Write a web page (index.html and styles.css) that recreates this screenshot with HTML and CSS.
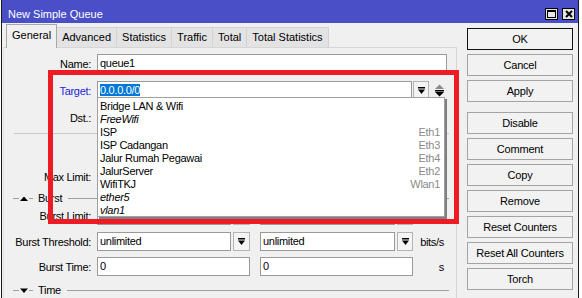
FILE: index.html
```html
<!DOCTYPE html>
<html lang="en">

<head>
    <meta charset="UTF-8">
    <title>New Simple Queue</title>
    <link rel="stylesheet" href="styles.css">
</head>

<body>

    <div class="window">
        <div class="titlebar">
            <span class="title">New Simple Queue</span>
            <div class="title-buttons">
                <span class="tbtn">
                    <svg width="9" height="8" viewBox="0 0 9 8"><rect x="0.5" y="0.5" width="8" height="7" fill="none" stroke="#000"/><rect x="0" y="0" width="9" height="2" fill="#000"/></svg>
                </span>
                <span class="tbtn">
                    <svg width="8" height="8" viewBox="0 0 8 8"><path d="M1 1 L7 7 M7 1 L1 7" stroke="#000" stroke-width="2"/></svg>
                </span>
            </div>
        </div>

        <div class="content">
            <div class="main">
                <div class="tabs">
                    <div class="tab active">General</div>
                    <div class="tab">Advanced</div>
                    <div class="tab">Statistics</div>
                    <div class="tab">Traffic</div>
                    <div class="tab">Total</div>
                    <div class="tab">Total Statistics</div>
                </div>

                <div class="panel">
                    <div class="row row-name">
                        <span class="label">Name:</span>
                        <div class="field wide">queue1</div>
                    </div>

                    <div class="row">
                        <span class="label blue">Target:</span>
                        <div class="field combo"><span class="sel">0.0.0.0/0</span></div>
                        <span class="drop drop-gap1">
                            <svg width="7" height="7" viewBox="0 0 7 7"><rect width="7" height="1.5"/><polygon points="0,2.5 7,2.5 3.5,7"/></svg>
                        </span>
                        <span class="spin">
                            <svg width="9" height="13" viewBox="0 0 9 13"><polygon points="0,5 9,5 4.5,0.5" fill="#8a8a8a"/><rect x="0" y="6" width="9" height="1.5"/><polygon points="0,8 9,8 4.5,12.5"/></svg>
                        </span>
                    </div>

                    <div class="row">
                        <span class="label">Dst.:</span>
                        <div class="field combo"></div>
                        <span class="drop drop-gap1">
                            <svg width="7" height="7" viewBox="0 0 7 7"><rect width="7" height="1.5"/><polygon points="0,2.5 7,2.5 3.5,7"/></svg>
                        </span>
                        <span class="spin">
                            <svg width="9" height="13" viewBox="0 0 9 13"><polygon points="0,5 9,5 4.5,0.5" fill="#8a8a8a"/><rect x="0" y="6" width="9" height="1.5"/><polygon points="0,8 9,8 4.5,12.5"/></svg>
                        </span>
                    </div>

                    <div class="separator"></div>

                    <!-- column captions sit under the open list -->
                    <div class="row row-head"></div>

                    <div class="row row-max">
                        <span class="label">Max Limit:</span>
                        <div class="field half"></div>
                        <span class="drop"><svg width="7" height="7" viewBox="0 0 7 7"><rect width="7" height="1.5"/><polygon points="0,2.5 7,2.5 3.5,7"/></svg></span>
                        <div class="field half second"></div>
                        <span class="drop"><svg width="7" height="7" viewBox="0 0 7 7"><rect width="7" height="1.5"/><polygon points="0,2.5 7,2.5 3.5,7"/></svg></span>
                        <span class="unit"></span>
                    </div>

                    <div class="section section-burst">
                        <span class="dash short"></span>
                        <svg class="tri" width="8" height="5" viewBox="0 0 8 5"><polygon points="0,5 8,5 4,0.5"/></svg>
                        <span class="dash tiny"></span>
                        <span class="section-name">Burst</span>
                        <span class="dash long"></span>
                    </div>

                    <div class="row row-burst">
                        <span class="label">Burst Limit:</span>
                        <div class="field half">unlimited</div>
                        <span class="drop"><svg width="7" height="7" viewBox="0 0 7 7"><rect width="7" height="1.5"/><polygon points="0,2.5 7,2.5 3.5,7"/></svg></span>
                        <div class="field half second">unlimited</div>
                        <span class="drop"><svg width="7" height="7" viewBox="0 0 7 7"><rect width="7" height="1.5"/><polygon points="0,2.5 7,2.5 3.5,7"/></svg></span>
                        <span class="unit">bits/s</span>
                    </div>

                    <div class="row row-threshold">
                        <span class="label">Burst Threshold:</span>
                        <div class="field half">unlimited</div>
                        <span class="drop"><svg width="7" height="7" viewBox="0 0 7 7"><rect width="7" height="1.5"/><polygon points="0,2.5 7,2.5 3.5,7"/></svg></span>
                        <div class="field half second">unlimited</div>
                        <span class="drop"><svg width="7" height="7" viewBox="0 0 7 7"><rect width="7" height="1.5"/><polygon points="0,2.5 7,2.5 3.5,7"/></svg></span>
                        <span class="unit">bits/s</span>
                    </div>

                    <div class="row row-time">
                        <span class="label">Burst Time:</span>
                        <div class="field full-half">0</div>
                        <div class="field full-half second">0</div>
                        <span class="unit">s</span>
                    </div>

                    <div class="section section-time">
                        <span class="dash short"></span>
                        <svg class="tri" width="8" height="5" viewBox="0 0 8 5"><polygon points="0,0.5 8,0.5 4,5"/></svg>
                        <span class="dash tiny"></span>
                        <span class="section-name">Time</span>
                        <span class="dash long"></span>
                    </div>

                    <div class="target-list">
                        <div class="opt"><span>Bridge LAN &amp; Wifi</span></div>
                        <div class="opt italic"><span>FreeWifi</span></div>
                        <div class="opt"><span>ISP</span><span class="iface">Eth1</span></div>
                        <div class="opt"><span>ISP Cadangan</span><span class="iface">Eth3</span></div>
                        <div class="opt"><span>Jalur Rumah Pegawai</span><span class="iface">Eth4</span></div>
                        <div class="opt"><span>JalurServer</span><span class="iface">Eth2</span></div>
                        <div class="opt"><span>WifiTKJ</span><span class="iface">Wlan1</span></div>
                        <div class="opt italic"><span>ether5</span></div>
                        <div class="opt italic"><span>vlan1</span></div>
                    </div>

                    <div class="highlight"></div>
                </div>
            </div>

            <div class="buttons">
                <button class="btn default">OK</button>
                <button class="btn">Cancel</button>
                <button class="btn">Apply</button>
                <button class="btn spaced">Disable</button>
                <button class="btn">Comment</button>
                <button class="btn">Copy</button>
                <button class="btn">Remove</button>
                <button class="btn">Reset Counters</button>
                <button class="btn">Reset All Counters</button>
                <button class="btn">Torch</button>
            </div>
        </div>
    </div>

</body>

</html>
```

FILE: styles.css
```css
body {
    margin: 0;
    background-color: #ffffff;
    font-family: "Liberation Sans", Arial, sans-serif;
    font-size: 11px;
    letter-spacing: -0.3px;
    color: #000;
}

.window {
    width: 578px;
    height: 298px;
    margin-left: 1px;
    box-sizing: border-box;
    border-left: 1px solid #1a1a1a;
    border-right: 1px solid #1a1a1a;
    background-color: #f0f0f0;
    overflow: hidden;
}

/* title bar */
.titlebar {
    height: 23px;
    box-sizing: border-box;
    padding: 5px 3px 0 6px;
    display: flex;
    align-items: center;
    justify-content: space-between;
    background-color: #4a4fc8;
    color: #fff;
}

.title {
    line-height: 13px;
    letter-spacing: 0;
}

.title-buttons {
    display: flex;
    gap: 4px;
}

.tbtn {
    width: 13px;
    height: 12px;
    box-sizing: border-box;
    border: 1px solid #000;
    background-color: #e6e6e6;
    display: flex;
    align-items: center;
    justify-content: center;
}

.content {
    display: flex;
}

.main {
    width: 455px;
}

/* tabs */
.tabs {
    display: flex;
    align-items: flex-end;
    height: 24px;
    margin-top: 1px;
    margin-bottom: -1px;
    padding-left: 4px;
    letter-spacing: 0;
}

.tab {
    height: 21px;
    line-height: 18px;
    box-sizing: border-box;
    padding: 0 5px;
    background-color: #e3e3e3;
    border-top: 1px solid #d2d2d2;
    border-right: 1px solid #d2d2d2;
}

.tab.active {
    height: 24px;
    line-height: 20px;
    background-color: #f0f0f0;
    border: 1px solid #a8a8a8;
    border-bottom: none;
    position: relative;
    z-index: 1;
}

/* panel */
.panel {
    position: relative;
    height: 260px;
    margin-left: 1px;
    border: 1px solid #d6d6d6;
    border-left-color: #e4e4e4;
}

.row {
    display: flex;
    align-items: center;
    height: 19px;
    margin-top: 8px;
}

.row-name {
    margin-top: 6px;
}

.row-head {
    height: 20px;
    margin-top: 6px;
}

.row-max {
    margin-top: 7px;
}

.row-burst {
    margin-top: 1px;
}

.row-threshold {
    margin-top: 7px;
}

.row-time {
    margin-top: 6px;
}

.label {
    width: 93px;
    flex-shrink: 0;
    box-sizing: border-box;
    padding-right: 6px;
    text-align: right;
}

.blue {
    color: #1f1fdc;
}

.field {
    height: 19px;
    box-sizing: border-box;
    border: 1px solid #9a9a9a;
    background-color: #fff;
    padding-left: 2px;
    line-height: 17px;
    white-space: nowrap;
    overflow: hidden;
}

.field.wide {
    width: 350px;
}

.field.combo {
    width: 315px;
}

.field.half {
    width: 134px;
}

.field.full-half {
    width: 153px;
}

.field.half + .drop {
    margin-left: 2px;
    width: 17px;
}

.field.second {
    margin-left: 10px;
}

.field.half.second {
    width: 135px;
}

.sel {
    background-color: #0078d7;
    color: #fff;
}

.drop {
    width: 16px;
    height: 19px;
    box-sizing: border-box;
    border: 1px solid #b4b4b4;
    background-color: #f4f4f4;
    display: flex;
    align-items: center;
    justify-content: center;
}

.drop.drop-gap1 {
    margin-left: 1px;
}

.field.second + .drop {
    width: 16px;
}

.spin {
    width: 15px;
    height: 19px;
    margin-left: 3px;
    display: flex;
    align-items: center;
    justify-content: center;
}

.unit {
    width: 26px;
    margin-left: 5px;
    text-align: right;
}

.separator {
    height: 1px;
    margin: 6px 7px 0 10px;
    background-color: #c8c8c8;
}

/* collapsible sections */
.section {
    display: flex;
    align-items: center;
    height: 14px;
}

.section-burst {
    margin-top: 5px;
}

.section-time {
    margin-top: 7px;
}

.dash {
    height: 1px;
    background-color: #a0a0a0;
}

.dash.short {
    width: 6px;
    margin-left: 9px;
}

.tri {
    margin-left: 1px;
}

.dash.tiny {
    width: 4px;
    margin-left: 1px;
}

.section-name {
    margin-left: 5px;
}

.dash.long {
    flex: 1;
    margin-left: 6px;
    margin-right: 7px;
}

/* open dropdown of Target */
.target-list {
    position: absolute;
    left: 93px;
    top: 49px;
    width: 348px;
    box-sizing: border-box;
    padding-top: 1px;
    border: 1px solid #a0a0a0;
    box-shadow: 2px 2px 0 #7f7f7f;
    background-color: #fff;
}

.opt {
    display: flex;
    justify-content: space-between;
    height: 13px;
    line-height: 14px;
    padding: 0 4px 0 2px;
}

.opt.italic {
    font-style: italic;
}

.iface {
    color: #8a8a8a;
}

.highlight {
    position: absolute;
    left: 44px;
    top: 22px;
    width: 411px;
    height: 154px;
    box-sizing: border-box;
    border: 5px solid #ed1c24;
}

/* right side buttons */
.buttons {
    width: 106px;
    margin-left: 10px;
    padding-top: 5px;
    display: flex;
    flex-direction: column;
    gap: 4px;
}

.btn {
    height: 22px;
    box-sizing: border-box;
    padding: 0;
    border: 1px solid #a3a3a3;
    background-color: #f2f2f2;
    font-family: inherit;
    font-size: 11px;
    letter-spacing: -0.2px;
    color: #000;
}

.btn.default {
    border-color: #111;
}

.btn.spaced {
    margin-top: 6px;
}
```
